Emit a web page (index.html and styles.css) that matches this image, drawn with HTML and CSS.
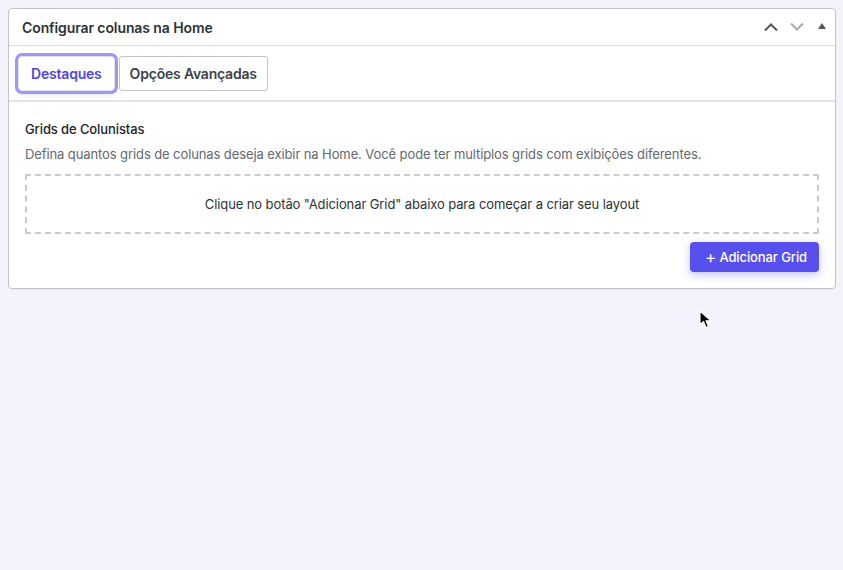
FILE: index.html
```html
<!DOCTYPE html>
<html lang="pt-BR">
<head>
    <meta charset="UTF-8">
    <meta name="viewport" content="width=device-width, initial-scale=1.0">
    <title>Configurar colunas na Home</title>
    <link rel="stylesheet" href="styles.css">
</head>
<body>
    <div class="postbox">
        <div class="postbox-header">
            <h2 class="hndle">Configurar colunas na Home</h2>
            <div class="handle-actions">
                <button class="handle-btn" aria-label="Mover para cima">
                    <svg width="16" height="10" viewBox="0 0 16 10"><path d="M2 8.5 L8 2.5 L14 8.5" fill="none" stroke="#50575e" stroke-width="2"/></svg>
                </button>
                <button class="handle-btn" aria-label="Mover para baixo">
                    <svg width="16" height="10" viewBox="0 0 16 10"><path d="M2 1.5 L8 7.5 L14 1.5" fill="none" stroke="#a7aaad" stroke-width="2"/></svg>
                </button>
                <button class="handle-btn toggle" aria-label="Recolher">
                    <svg width="10" height="8" viewBox="0 0 10 8"><path d="M1 7 L5 1 L9 7 Z" fill="#50575e"/></svg>
                </button>
            </div>
        </div>
        <div class="tabs">
            <button class="tab active">Destaques</button>
            <button class="tab">Opções Avançadas</button>
        </div>
        <div class="inside">
            <h3 class="section-title">Grids de Colunistas</h3>
            <p class="description">Defina quantos grids de colunas deseja exibir na Home. Você pode ter multiplos grids com exibições diferentes.</p>
            <div class="empty-grids">Clique no botão "Adicionar Grid" abaixo para começar a criar seu layout</div>
            <div class="actions">
                <button class="btn-primary"><span class="plus">+</span> Adicionar Grid</button>
            </div>
        </div>
    </div>

    <svg class="cursor" width="14" height="20" viewBox="0 0 14 20">
        <path d="M1 1 L1 15 L4.5 11.5 L7 17.5 L9.5 16.5 L7 10.8 L12 10.8 Z" fill="#000" stroke="#fff" stroke-width="1.2" stroke-linejoin="round"/>
    </svg>
</body>
</html>
```

FILE: styles.css
```css
body {
    margin: 0;
    padding: 8px;
    background-color: #f3f3fc;
    font-family: Inter, "Noto Sans", Arial, sans-serif;
    font-size: 13px;
    letter-spacing: -0.1px;
    color: #1d2327;
    min-height: 570px;
    box-sizing: border-box;
}
* {box-sizing: border-box;}
button {
    font-family: inherit;
    letter-spacing: inherit;
}
.postbox {
    width: 828px;
    background-color: #fff;
    border: 1px solid #c3c4c7;
    border-radius: 4px;
    box-shadow: 0 1px 1px rgba(0, 0, 0, .04);
}
.postbox-header {
    display: flex;
    align-items: center;
    justify-content: space-between;
    height: 37px;
    padding: 0 6px 0 13px;
    border-bottom: 1px solid #dcdcde;
}
.hndle {
    margin: 0;
    font-size: 14px;
    font-weight: 600;
    color: #2c3338;
}
.handle-actions {
    display: flex;
    align-items: center;
    gap: 10px;
}
.handle-btn {
    display: flex;
    align-items: center;
    justify-content: center;
    width: 16px;
    height: 20px;
    padding: 0;
    border: 0;
    background: none;
    cursor: pointer;
}
.handle-btn.toggle {
    width: 14px;
    margin-top: -3px;
}
.tabs {
    display: flex;
    gap: 4px;
    padding: 10px 10px 9px 9px;
    border-bottom: 2px solid #e4e4e7;
}
.tab {
    height: 35px;
    padding: 0 10px;
    background-color: #fff;
    border: 1px solid #c3c4c7;
    border-radius: 3px;
    font-size: 14px;
    font-weight: 600;
    letter-spacing: -0.2px;
    color: #3c434a;
    cursor: pointer;
}
.tab.active {
    padding: 0 12px;
    color: #5046e5;
    border-color: #e0e0e6;
    box-shadow: 0 0 0 3px #9d98f6, 0 5px 4px rgba(0, 0, 0, .08);
    border-radius: 4px;
}
.inside {
    padding: 17px 16px 16px;
}
.section-title {
    margin: 0;
    font-size: 13px;
    font-weight: 500;
    line-height: 20px;
    color: #1d2327;
}
.description {
    margin: 5px 0 0;
    line-height: 20px;
    color: #646970;
}
.empty-grids {
    margin-top: 10px;
    height: 60px;
    display: flex;
    align-items: center;
    justify-content: center;
    border: 2px dashed #cbccce;
    color: #2c3338;
}
.actions {
    display: flex;
    justify-content: flex-end;
    margin-top: 8px;
}
.btn-primary {
    height: 30px;
    padding: 0 12px 0 15px;
    border: 0;
    border-radius: 4px;
    background-color: #5850ec;
    color: #fff;
    font-size: 13px;
    font-weight: 500;
    box-shadow: 0 3px 8px rgba(88, 80, 236, .35);
    cursor: pointer;
}
.plus {
    font-size: 17px;
    font-weight: 400;
    line-height: 1;
    vertical-align: -1px;
}
.cursor {
    position: absolute;
    left: 699px;
    top: 310px;
}
```
